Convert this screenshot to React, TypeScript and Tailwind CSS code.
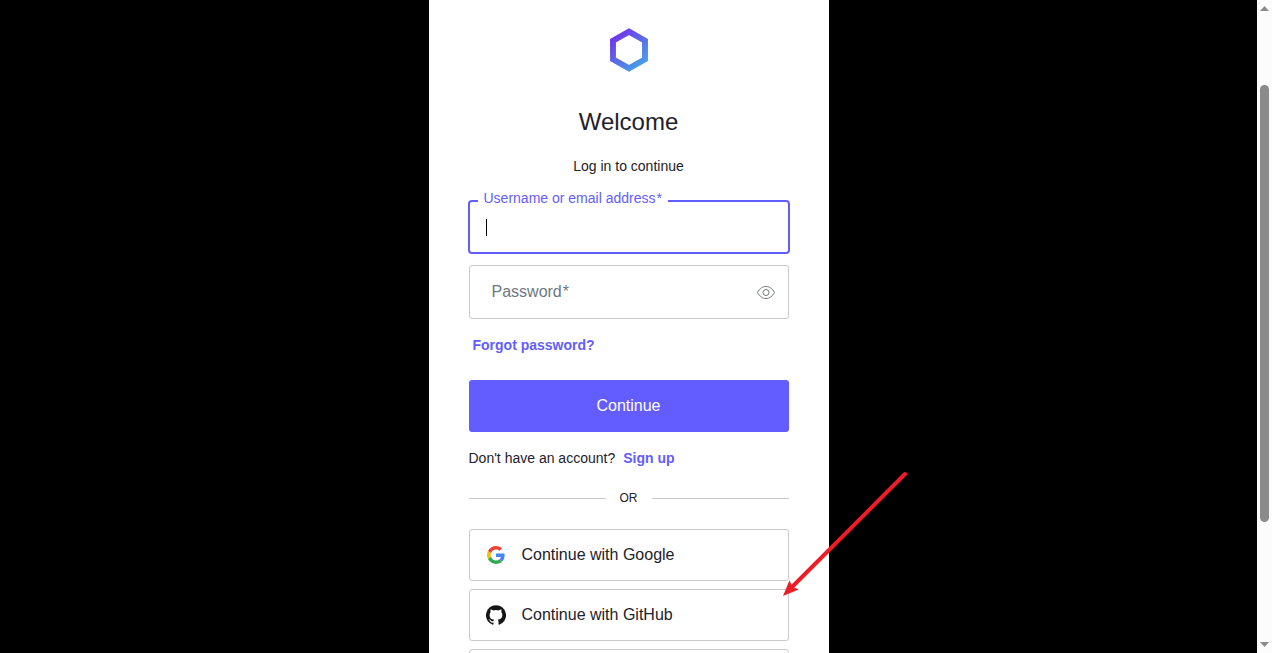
import { useState } from 'react';

function Logo() {
  return (
    <svg viewBox="0 0 40 44" className="h-11 w-10" role="img" aria-label="Logo">
      <defs>
        <linearGradient id="hex" x1="8" y1="6" x2="34" y2="36" gradientUnits="userSpaceOnUse">
          <stop offset="0" stopColor="#7036ea" />
          <stop offset="1" stopColor="#479fe6" />
        </linearGradient>
      </defs>
      <path d="M20 3.6 36 12.8V31.2L20 40.4 4 31.2V12.8Z" fill="none" stroke="url(#hex)" strokeWidth="5.9" />
    </svg>
  );
}

function EyeIcon() {
  return (
    <svg viewBox="0 0 20 14" className="h-3.5 w-5" fill="none" stroke="#6f7780" strokeWidth="1" aria-hidden="true">
      <path d="M1.5 7.5C3.8 3.3 6.6 1.5 10 1.500S16.200 3.300 18.500 7.500C16.200 11.700 13.400 13.500 10 13.500S3.800 11.700 1.500 7.500Z" />
      <circle cx="10" cy="7.500" r="3" />
    </svg>
  );
}

function GoogleIcon() {
  return (
    <svg viewBox="0 0 48 48" className="h-[18px] w-[18px]" aria-hidden="true">
      <path fill="#EA4335" d="M24 9.5c3.54 0 6.71 1.22 9.21 3.6l6.85-6.85C35.9 2.38 30.47 0 24 0 14.62 0 6.51 5.38 2.56 13.22l7.98 6.19C12.43 13.72 17.74 9.5 24 9.5z" />
      <path fill="#4285F4" d="M46.98 24.55c0-1.57-.15-3.09-.38-4.55H24v9.02h12.94c-.58 2.96-2.26 5.48-4.78 7.18l7.73 6c4.51-4.18 7.09-10.36 7.09-17.65z" />
      <path fill="#FBBC05" d="M10.53 28.59c-.48-1.45-.76-2.99-.76-4.59s.27-3.14.76-4.59l-7.98-6.19C.92 16.46 0 20.12 0 24c0 3.88.92 7.54 2.56 10.78l7.97-6.19z" />
      <path fill="#34A853" d="M24 48c6.48 0 11.93-2.13 15.89-5.81l-7.73-6c-2.15 1.45-4.92 2.3-8.16 2.3-6.26 0-11.57-4.22-13.47-9.91l-7.98 6.19C6.51 42.62 14.62 48 24 48z" />
    </svg>
  );
}

function GitHubIcon() {
  return (
    <svg viewBox="0 0 24 24" className="h-5 w-5" fill="#161514" aria-hidden="true">
      <path d="M12 .3a12 12 0 0 0-3.8 23.4c.6.1.8-.3.8-.6v-2c-3.3.7-4-1.6-4-1.6-.6-1.4-1.4-1.8-1.4-1.8-1-.7.1-.7.1-.7 1.2 0 1.9 1.2 1.9 1.2 1 1.8 2.8 1.3 3.5 1 0-.8.4-1.3.7-1.6-2.7-.3-5.5-1.3-5.5-6 0-1.2.5-2.3 1.3-3.1-.2-.4-.6-1.6 0-3.2 0 0 1-.3 3.4 1.2a11.5 11.5 0 0 1 6 0c2.3-1.5 3.3-1.2 3.3-1.2.6 1.6.2 2.8 0 3.2.9.8 1.3 1.9 1.3 3.2 0 4.6-2.8 5.6-5.5 5.9.5.4.9 1 .9 2.2v3.3c0 .3.1.7.8.6A12 12 0 0 0 12 .3" />
    </svg>
  );
}

const socialButton =
  'flex h-[52px] w-full shrink-0 items-center rounded-[3px] border border-[#c9cace] text-base text-[#1e212a]';

export default function App() {
  const [visible, setVisible] = useState(false);
  const [username, setUsername] = useState('');
  return (
    <div className="relative flex h-screen overflow-hidden bg-black font-['Liberation_Sans',Arial,sans-serif] text-sm leading-5 text-[#1e212a]">
      <main className="flex min-w-0 flex-1 justify-center overflow-hidden">
        <section className="flex w-full max-w-[400px] flex-col bg-white px-10 pt-5">
          <div className="flex h-[60px] shrink-0 items-center justify-center">
            <Logo />
          </div>
          <h1 className="mt-7 text-center text-2xl leading-7">Welcome</h1>
          <p className="mt-5 text-center">Log in to continue</p>

          <form className="mt-6 flex flex-col" onSubmit={(e) => e.preventDefault()}>
            <div className="relative -mx-px">
              <input
                id="username"
                type="text"
                required
                value={username}
                onChange={(e) => setUsername(e.target.value)}
                className="block h-[54px] w-full rounded-[4px] border-2 border-[#635dff] bg-white px-4 text-base caret-black shadow-none outline-none"
              />
              <label htmlFor="username" className="absolute -top-3 left-2.5 bg-white px-1.5 text-[#635dff]">
                Username or email address<span className="pl-px">*</span>
              </label>
              {username === '' && (
                <span aria-hidden="true" className="pointer-events-none absolute top-[19px] left-[18px] h-[17px] w-px bg-black" />
              )}
            </div>

            <div className="mt-[11px] flex h-[54px] items-center rounded-[3px] border border-[#c9cace] pr-3">
              <div className="relative flex h-full flex-1 items-center">
                <input
                  id="password"
                  type={visible ? 'text' : 'password'}
                  required
                  placeholder=" "
                  className="peer h-full w-full bg-transparent px-4 text-base outline-none"
                />
                <label
                  htmlFor="password"
                  className="pointer-events-none absolute left-[22px] text-base text-[#6f7780] peer-[:not(:placeholder-shown)]:hidden"
                >
                  Password<span className="pl-px">*</span>
                </label>
              </div>
              <button type="button" aria-label="Show password" onClick={() => setVisible(!visible)}>
                <EyeIcon />
              </button>
            </div>

            <a href="#forgot" className="mt-4 ml-1 self-start font-bold text-[#635dff]">
              Forgot password?
            </a>
            <button type="submit" className="mt-[25px] h-[52px] rounded-[3px] bg-[#635dff] text-base text-white">
              Continue
            </button>
          </form>

          <p className="mt-4">
            Don't have an account?
            <a href="#signup" className="ml-2 font-bold text-[#635dff]">
              Sign up
            </a>
          </p>

          <div className="mt-5 flex items-center text-xs leading-[21px]">
            <span className="h-px flex-1 bg-[#c9cace]" />
            <span className="px-3.5">OR</span>
            <span className="h-px flex-1 bg-[#c9cace]" />
          </div>

          <div className="mt-5 flex flex-col gap-2">
            <button type="button" className={socialButton}>
              <span className="flex w-[52px] justify-center">
                <GoogleIcon />
              </span>
              Continue with Google
            </button>
            <button type="button" className={socialButton}>
              <span className="flex w-[52px] justify-center">
                <GitHubIcon />
              </span>
              Continue with GitHub
            </button>
            <button type="button" aria-label="More sign-in options" className={socialButton} />
          </div>
        </section>
      </main>

      <div aria-hidden="true" className="flex w-[15px] shrink-0 flex-col items-center justify-between bg-[#fcfcfc] py-1.5">
        <svg viewBox="0 0 9 5" className="h-[5px] w-[9px]" fill="#8b8b8b">
          <path d="M0 5 4.5 0 9 5Z" />
        </svg>
        <span className="mt-[74px] h-[437px] w-[9px] rounded-full bg-[#8b8b8b]" />
        <span className="flex-1" />
        <svg viewBox="0 0 9 5" className="h-[5px] w-[9px]" fill="#8b8b8b">
          <path d="M0 0H9L4.5 5Z" />
        </svg>
      </div>

      <svg viewBox="0 0 128 128" className="pointer-events-none absolute top-[470px] left-[782px] h-32 w-32" aria-hidden="true">
        <path d="M123 4 9 118" stroke="#ee1c25" strokeWidth="4" strokeLinecap="round" />
        <path d="M1 126 7.500 110.300 9.700 115.500 11.500 117.300 16.700 119.500Z" fill="#ee1c25" />
      </svg>
    </div>
  );
}
